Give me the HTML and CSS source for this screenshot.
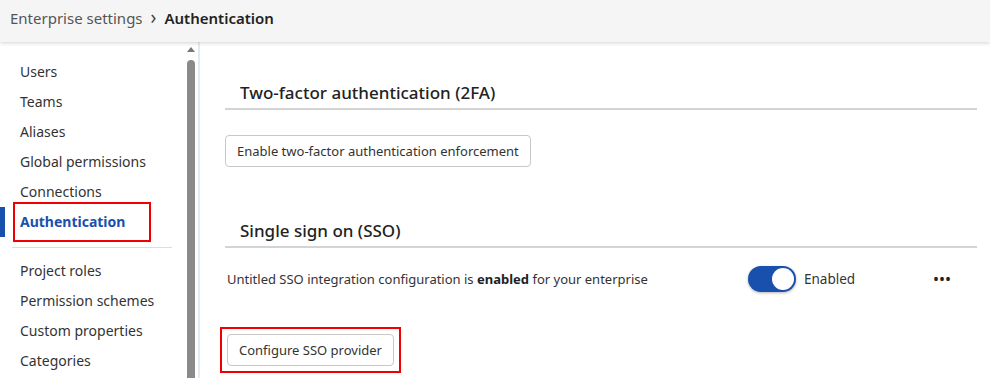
FILE: index.html
```html
<!DOCTYPE html>
<html lang="en">
<head>
    <meta charset="UTF-8">
    <title>Enterprise settings - Authentication</title>
    <link rel="stylesheet" href="styles.css">
</head>
<body>
    <header class="topbar">
        <span class="crumb">Enterprise settings</span>
        <span class="crumb-sep">&#8250;</span>
        <span class="crumb-current">Authentication</span>
    </header>
    <div class="layout">
        <aside class="sidebar">
            <nav class="side-nav">
                <a class="nav-item">Users</a>
                <a class="nav-item">Teams</a>
                <a class="nav-item">Aliases</a>
                <a class="nav-item">Global permissions</a>
                <a class="nav-item">Connections</a>
                <a class="nav-item active"><span class="mark">Authentication</span></a>
                <div class="nav-divider"></div>
                <a class="nav-item">Project roles</a>
                <a class="nav-item">Permission schemes</a>
                <a class="nav-item">Custom properties</a>
                <a class="nav-item">Categories</a>
            </nav>
            <div class="scrollbar">
                <div class="scroll-arrow"></div>
                <div class="scroll-thumb"></div>
            </div>
        </aside>
        <main class="content">
            <section class="section">
                <h2 class="section-title">Two-factor authentication (2FA)</h2>
                <button class="btn">Enable two-factor authentication enforcement</button>
            </section>
            <section class="section">
                <h2 class="section-title">Single sign on (SSO)</h2>
                <div class="sso-row">
                    <p class="sso-text">Untitled SSO integration configuration is <strong>enabled</strong> for your enterprise</p>
                    <div class="toggle-wrap">
                        <span class="toggle"><span class="knob"></span></span>
                        <span class="toggle-label">Enabled</span>
                    </div>
                    <span class="more">&bull;&bull;&bull;</span>
                </div>
                <div class="mark-btn">
                    <button class="btn">Configure SSO provider</button>
                </div>
            </section>
        </main>
    </div>
</body>
</html>
```

FILE: styles.css
```css
body {
    margin: 0;
    font-family: "Noto Sans", Arial, sans-serif;
    color: #333;
    background-color: #fff;
    height: 378px;
    overflow: hidden;
}
.topbar {
    height: 42px;
    box-sizing: border-box;
    background-color: #f5f5f5;
    display: flex;
    align-items: center;
    padding: 0 0 6px 10px;
    font-size: 15px;
    box-shadow: 0 1px 4px rgba(0, 0, 0, 0.18);
    position: relative;
}
.crumb {
    color: #555;
}
.crumb-sep {
    color: #444;
    font-size: 19px;
    margin: -2px 8px 0 8px;
}
.crumb-current {
    color: #222;
    font-weight: 600;
}
.layout {
    display: flex;
    height: 336px;
}
.sidebar {
    width: 198px;
    border-right: 2px solid #e3eaf3;
    display: flex;
    flex-shrink: 0;
}
.side-nav {
    flex: 1;
    padding-top: 15px;
    display: flex;
    flex-direction: column;
}
.nav-item {
    height: 30px;
    line-height: 30px;
    padding-left: 20px;
    font-size: 14px;
    color: #333;
}
.nav-item.active {
    color: #1a50ad;
    font-weight: 700;
    border-left: 5px solid #1a50ad;
    padding-left: 15px;
    position: relative;
}
.nav-item .mark {
    position: relative;
}
.nav-item .mark::after {
    content: "";
    position: absolute;
    left: -7px;
    right: -26px;
    top: -10px;
    bottom: -11px;
    border: 2px solid #f00000;
}
.nav-divider {
    height: 1px;
    background-color: #ddd;
    margin: 10px 14px 8px 12px;
}
.scrollbar {
    width: 10px;
    margin-right: 2px;
    display: flex;
    flex-direction: column;
    align-items: center;
}
.scroll-arrow {
    width: 0;
    height: 0;
    border-left: 4px solid transparent;
    border-right: 4px solid transparent;
    border-bottom: 5px solid #777;
    margin-top: 5px;
}
.scroll-thumb {
    width: 8px;
    flex: 1;
    margin-top: 8px;
    background-color: #8a8a8a;
    border-radius: 4px 4px 0 0;
}
.content {
    flex: 1;
    padding: 39px 13px 0 25px;
}
.section {
    margin-bottom: 52px;
}
.section-title {
    margin: 0;
    font-size: 17px;
    font-weight: 500;
    color: #222;
    padding: 0 0 4px 15px;
    border-bottom: 2px solid #d4d4d4;
}
.btn {
    font-family: inherit;
    font-size: 13px;
    color: #333;
    background-color: #fff;
    border: 1px solid #c8c8c8;
    border-radius: 4px;
    height: 32px;
    padding: 0 11px;
    margin-top: 25px;
    cursor: pointer;
}
.sso-row {
    display: flex;
    align-items: center;
    height: 36px;
    margin-top: 13px;
}
.sso-text {
    margin: 0 0 0 2px;
    font-size: 13px;
    width: 521px;
}
.sso-text strong {
    color: #222;
}
.toggle-wrap {
    display: flex;
    align-items: center;
    width: 185px;
}
.toggle {
    width: 48px;
    height: 26px;
    border-radius: 13px;
    background-color: #1a50ad;
    position: relative;
    box-shadow: 0 1px 3px rgba(0, 0, 0, 0.3);
}
.knob {
    position: absolute;
    right: 2px;
    top: 2px;
    width: 22px;
    height: 22px;
    border-radius: 50%;
    background-color: #fff;
}
.toggle-label {
    margin-left: 8px;
    font-size: 13.5px;
}
.more {
    font-size: 16px;
    letter-spacing: 0;
    color: #222;
}
.mark-btn {
    display: inline-block;
    border: 2px solid #f00000;
    padding: 5px;
    margin: 30px 0 0 -5px;
}
.mark-btn .btn {
    margin-top: 0;
}
```
